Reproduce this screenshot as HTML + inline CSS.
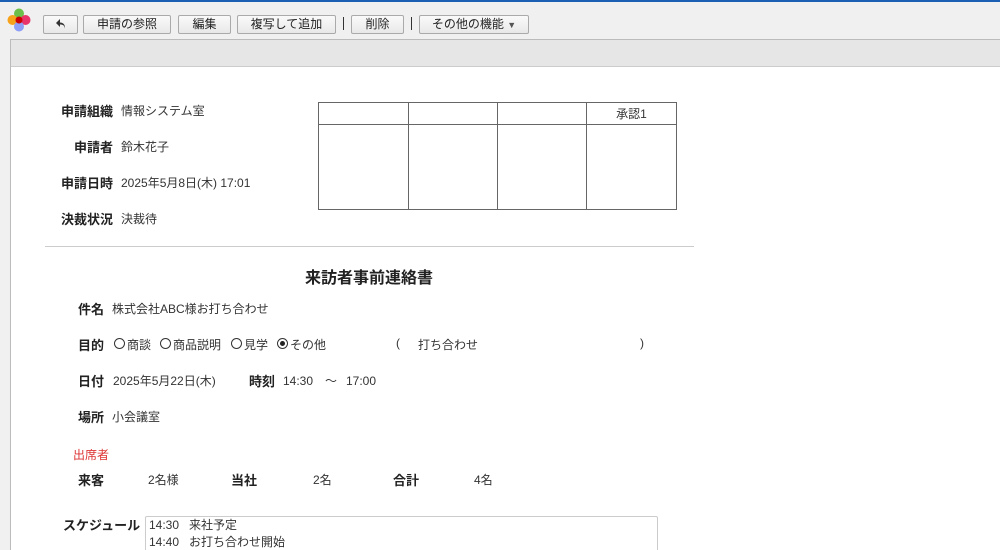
<!DOCTYPE html>
<html><head><meta charset="utf-8"><style>
*{margin:0;padding:0;box-sizing:border-box}
html,body{width:1000px;height:550px;overflow:hidden}
body{background:#f0f0f0;font-family:"Liberation Sans","Noto Sans CJK JP",sans-serif;font-size:12px;color:#333;position:relative}
.a{position:absolute;white-space:nowrap}
.b{font-weight:bold;font-size:13px;color:#222}
.btn{position:absolute;top:15px;height:19px;border:1px solid #aaa;border-radius:2px;background:linear-gradient(#fafafa,#e8e8e8);font-size:12px;text-align:center;line-height:17px;color:#222}
.sep{position:absolute;top:17px;width:1px;height:13px;background:#333}
td{border:1px solid #666;padding:0}
.r{position:absolute;top:2px;width:11px;height:11px;border:1px solid #333;border-radius:50%}
</style></head><body>
<div class="a" style="left:0;top:0;width:1000px;height:2px;background:#1a5fb4"></div>
<svg class="a" style="left:6px;top:7px" width="26" height="26" viewBox="0 0 26 26">
<circle cx="13" cy="6.5" r="5" fill="#6cc04a"/><circle cx="6.5" cy="13" r="5" fill="#f7a21b"/><circle cx="19.5" cy="13" r="5" fill="#e8336b"/><circle cx="13" cy="19.5" r="5" fill="#8c9ef5"/><circle cx="13" cy="13" r="3.5" fill="#c00"/></svg>
<div class="btn" style="left:43px;width:35px"><svg width="12" height="12" viewBox="0 0 12 12" style="vertical-align:-2px"><path d="M5 1L1 5l4 4V6.5c3 0 4.5 1 5 4 .3-3.5-1.5-6-5-6z" fill="#333"/></svg></div>
<div class="btn" style="left:83px;width:88px">申請の参照</div>
<div class="btn" style="left:178px;width:53px">編集</div>
<div class="btn" style="left:237px;width:99px">複写して追加</div>
<div class="sep" style="left:343px"></div>
<div class="btn" style="left:351px;width:53px">削除</div>
<div class="sep" style="left:411px"></div>
<div class="btn" style="left:419px;width:110px">その他の機能 <span style="font-size:9px;color:#555">▼</span></div>
<div class="a" style="left:10px;top:39px;width:990px;height:511px;background:#fff;border-left:1px solid #bbb;border-top:1px solid #bbb"></div>
<div class="a" style="left:11px;top:40px;width:989px;height:27px;background:#e6e6e6;border-bottom:1px solid #ccc"></div>
<div class="a b" style="left:61px;top:101px">申請組織</div><div class="a" style="left:121px;top:102px">情報システム室</div>
<div class="a b" style="left:74px;top:137px">申請者</div><div class="a" style="left:121px;top:138px">鈴木花子</div>
<div class="a b" style="left:61px;top:173px">申請日時</div><div class="a" style="left:121px;top:174px">2025年5月8日(木) 17:01</div>
<div class="a b" style="left:61px;top:209px">決裁状況</div><div class="a" style="left:121px;top:210px">決裁待</div>
<table class="a" style="left:318px;top:102px;width:358px;height:108px;border-collapse:collapse;table-layout:fixed">
<colgroup><col style="width:90px"><col style="width:89px"><col style="width:89px"><col style="width:90px"></colgroup>
<tr style="height:22px"><td></td><td></td><td></td><td style="text-align:center">承認1</td></tr>
<tr><td></td><td></td><td></td><td></td></tr></table>
<div class="a" style="left:45px;top:246px;width:649px;height:1px;background:#ccc"></div>
<div class="a" style="left:305px;top:264px;font-size:16px;font-weight:bold;color:#222">来訪者事前連絡書</div>
<div class="a b" style="left:78px;top:299px">件名</div><div class="a" style="left:112px;top:300px">株式会社ABC様お打ち合わせ</div>
<div class="a b" style="left:78px;top:335px">目的</div>
<div class="a" style="left:114px;top:336px;width:220px;height:16px">
<span class="r" style="left:0"></span><span class="a" style="left:13px;top:0">商談</span>
<span class="r" style="left:46px"></span><span class="a" style="left:59px;top:0">商品説明</span>
<span class="r" style="left:117px"></span><span class="a" style="left:130px;top:0">見学</span>
<span class="r" style="left:163px"><span style="position:absolute;left:2px;top:2px;width:5px;height:5px;border-radius:50%;background:#222"></span></span><span class="a" style="left:176px;top:0">その他</span></div>
<div class="a" style="left:396px;top:336px">(</div><div class="a" style="left:418px;top:336px">打ち合わせ</div><div class="a" style="left:640px;top:336px">)</div>
<div class="a b" style="left:78px;top:371px">日付</div><div class="a" style="left:113px;top:372px">2025年5月22日(木)</div>
<div class="a b" style="left:249px;top:371px">時刻</div><div class="a" style="left:283px;top:374px">14:30</div><div class="a" style="left:325px;top:372px">～</div><div class="a" style="left:346px;top:374px">17:00</div>
<div class="a b" style="left:78px;top:407px">場所</div><div class="a" style="left:112px;top:408px">小会議室</div>
<div class="a" style="left:73px;top:446px;color:#d33">出席者</div>
<div class="a b" style="left:78px;top:470px">来客</div><div class="a" style="left:148px;top:471px">2名様</div>
<div class="a b" style="left:231px;top:470px">当社</div><div class="a" style="left:313px;top:471px">2名</div>
<div class="a b" style="left:393px;top:470px">合計</div><div class="a" style="left:474px;top:471px">4名</div>
<div class="a b" style="left:63px;top:515px">スケジュール</div>
<div class="a" style="left:145px;top:516px;width:513px;height:40px;border:1px solid #ccc;border-radius:2px;padding:0 3px;line-height:17px">14:30 &nbsp; 来社予定<br>14:40 &nbsp; お打ち合わせ開始</div>
</body></html>
